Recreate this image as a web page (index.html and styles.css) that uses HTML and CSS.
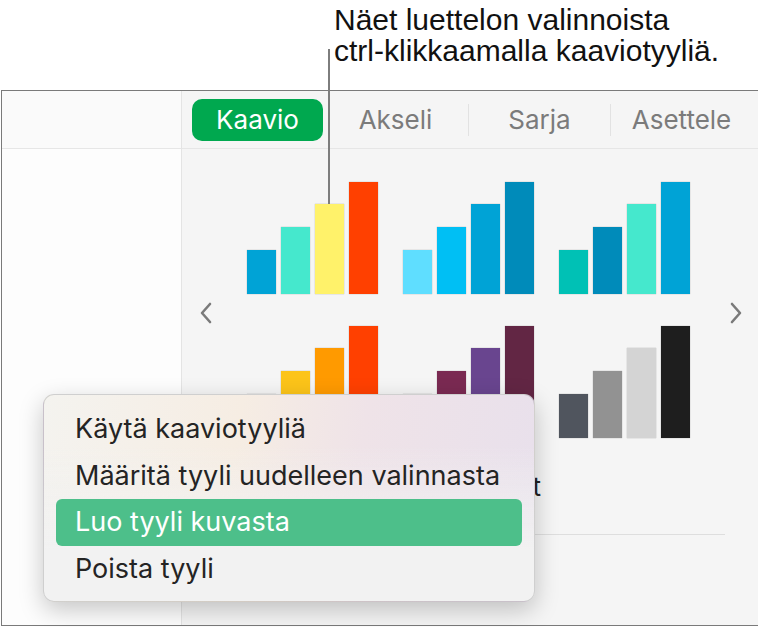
FILE: index.html
```html
<!DOCTYPE html>
<html lang="fi">
<head>
  <meta charset="UTF-8" />
  <meta name="viewport" content="width=device-width, initial-scale=1.0" />
  <title>Kaaviotyylit</title>
  <link rel="stylesheet" href="styles.css">
</head>
<body>
  <div class="callout">
    <p>Näet luettelon valinnoista<br>ctrl-klikkaamalla kaaviotyyliä.</p>
  </div>
  <div class="pointer"></div>

  <div class="window">
    <aside class="sidebar">
      <div class="sidebar-top"></div>
    </aside>

    <section class="panel">
      <nav class="tabs">
        <span class="tab active">Kaavio</span>
        <span class="tab akseli">Akseli</span>
        <span class="tab-sep"></span>
        <span class="tab sarja">Sarja</span>
        <span class="tab-sep"></span>
        <span class="tab asettele">Asettele</span>
      </nav>

      <div class="styles">
        <svg class="arrow" width="14" height="22" viewBox="0 0 14 22">
          <path d="M11 2 L3 11 L11 20" fill="none" stroke="#7a7a7a" stroke-width="2.6" stroke-linecap="round" stroke-linejoin="round"/>
        </svg>

        <div class="grid">
          <div class="chart">
            <span class="bar h1" style="background:#00a3d6"></span>
            <span class="bar h2" style="background:#45e8cd"></span>
            <span class="bar h3" style="background:#fff26a"></span>
            <span class="bar h4" style="background:#ff4000"></span>
          </div>
          <div class="chart">
            <span class="bar h1" style="background:#5fdeff"></span>
            <span class="bar h2" style="background:#00bff4"></span>
            <span class="bar h3" style="background:#00a3d6"></span>
            <span class="bar h4" style="background:#008bba"></span>
          </div>
          <div class="chart">
            <span class="bar h1" style="background:#00c1b5"></span>
            <span class="bar h2" style="background:#008bba"></span>
            <span class="bar h3" style="background:#45e8cd"></span>
            <span class="bar h4" style="background:#00a3d6"></span>
          </div>
          <div class="chart">
            <span class="bar h1" style="background:#ffe45c"></span>
            <span class="bar h2" style="background:#fcc419"></span>
            <span class="bar h3" style="background:#ff9a00"></span>
            <span class="bar h4" style="background:#ff4000"></span>
          </div>
          <div class="chart">
            <span class="bar h1" style="background:#9c2d5c"></span>
            <span class="bar h2" style="background:#7a2a52"></span>
            <span class="bar h3" style="background:#69458f"></span>
            <span class="bar h4" style="background:#622644"></span>
          </div>
          <div class="chart">
            <span class="bar h1" style="background:#50555e"></span>
            <span class="bar h2" style="background:#929292"></span>
            <span class="bar h3" style="background:#d4d4d4"></span>
            <span class="bar h4" style="background:#1e1e1e"></span>
          </div>
        </div>

        <svg class="arrow arrow-right" width="14" height="22" viewBox="0 0 14 22">
          <path d="M3 2 L11 11 L3 20" fill="none" stroke="#7a7a7a" stroke-width="2.6" stroke-linecap="round" stroke-linejoin="round"/>
        </svg>
      </div>

      <div class="label-row">Kaaviotyylit</div>
      <div class="divider"></div>
    </section>
  </div>

  <ul class="menu">
    <li>Käytä kaaviotyyliä</li>
    <li>Määritä tyyli uudelleen valinnasta</li>
    <li class="selected">Luo tyyli kuvasta</li>
    <li>Poista tyyli</li>
  </ul>
</body>
</html>
```

FILE: styles.css
```css
body {
  margin: 0;
  width: 758px;
  height: 627px;
  overflow: hidden;
  position: relative;
  background-color: #fff;
  font-family: "Liberation Sans", Arial, sans-serif;
}

.callout {
  height: 90px;
  box-sizing: border-box;
  padding: 4px 0 0 334px;
}

.callout p {
  margin: 0;
  font-size: 30px;
  line-height: 31px;
  color: #111;
}

.pointer {
  position: absolute;
  left: 328px;
  top: 49px;
  width: 2px;
  height: 155px;
  background-color: #7d7d7d;
  z-index: 2;
}

.window {
  margin-left: 1px;
  height: 536px;
  box-sizing: border-box;
  border-top: 1px solid #7a7a7a;
  border-left: 1px solid #7a7a7a;
  border-bottom: 1px solid #7a7a7a;
  display: grid;
  grid-template-columns: 180px 1fr;
}

.sidebar {
  background-color: #fdfdfd;
  border-right: 1px solid #e4e4e4;
}

.sidebar-top {
  height: 57px;
  background-color: #fafafa;
  border-bottom: 1px solid #e6e6e6;
}

.panel {
  background-color: #f5f5f5;
}

.tabs {
  height: 57px;
  border-bottom: 1px solid #e6e6e6;
  display: flex;
  align-items: center;
  padding-left: 10px;
  font-family: Inter, "Liberation Sans", sans-serif;
  font-size: 26px;
  color: #7b7b7b;
}

.tab {
  text-align: center;
}

.tab.active {
  width: 131px;
  height: 42px;
  line-height: 42px;
  border-radius: 10px;
  background-color: #00a84f;
  color: #fff;
}

.akseli { width: 145px; }
.sarja { width: 141px; }
.asettele { width: 141px; }

.tab-sep {
  width: 1px;
  height: 32px;
  background-color: #e2e2e2;
}

.styles {
  display: flex;
  align-items: center;
  padding-top: 33px;
}

.arrow {
  margin-left: 17px;
  margin-top: 6px;
}

.arrow-right {
  margin-left: 39px;
}

.grid {
  margin-left: 34px;
  display: grid;
  grid-template-columns: repeat(3, 131px);
  column-gap: 25px;
  row-gap: 32px;
}

.chart {
  height: 112px;
  display: flex;
  align-items: flex-end;
  gap: 5px;
}

.bar {
  width: 29px;
  box-shadow: 0 0 1px rgba(0, 0, 0, 0.35);
}

.h1 { height: 44px; }
.h2 { height: 67px; }
.h3 { height: 90px; }
.h4 { height: 112px; }

.label-row {
  width: 359px;
  margin-top: 34px;
  text-align: right;
  font-family: Inter, "Liberation Sans", sans-serif;
  font-size: 26px;
  line-height: 30px;
  color: #222;
}

.divider {
  height: 1px;
  margin: 32px 33px 0 18px;
  background-color: #dedede;
}

.menu {
  position: absolute;
  left: 43px;
  top: 394px;
  width: 492px;
  height: 208px;
  box-sizing: border-box;
  margin: 0;
  padding: 11px 12px 9px;
  list-style: none;
  border: 1px solid rgba(0, 0, 0, 0.14);
  border-radius: 11px;
  background:
    linear-gradient(to bottom, rgba(242, 242, 242, 0) 25%, #f2f2f2 75%),
    linear-gradient(100deg, #f4f3ef 0%, #f6ede3 38%, #efe3e8 62%, #e8e0ec 100%);
  box-shadow: 0 8px 24px rgba(0, 0, 0, 0.22);
  font-family: Inter, "Liberation Sans", sans-serif;
  font-size: 27px;
  color: #242424;
  z-index: 3;
}

.menu li {
  height: 46.5px;
  line-height: 46px;
  padding-left: 19px;
  border-radius: 6px;
}

.menu li.selected {
  background-color: #4dbf8a;
  color: #fff;
}
```
